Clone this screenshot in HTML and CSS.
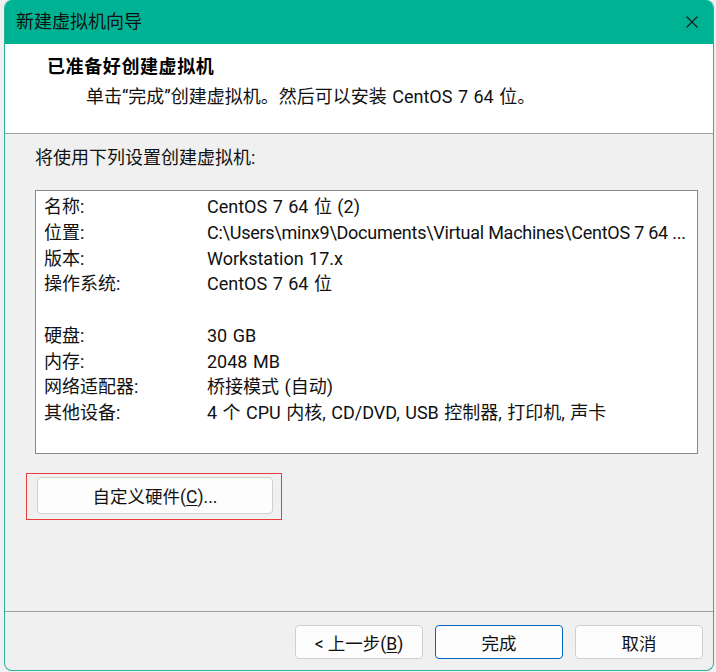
FILE: index.html
```html
<!DOCTYPE html>
<html lang="zh-CN">
<head>
<meta charset="utf-8">
<title>新建虚拟机向导</title>
<link rel="stylesheet" href="styles.css">
</head>
<body>
<div class="window">
  <div class="titlebar">
    <span class="title">新建虚拟机向导</span>
    <svg class="close" width="12" height="12" viewBox="0 0 12 12" aria-hidden="true">
      <path d="M0.5 0.5 L11.5 11.5 M11.5 0.5 L0.5 11.5" stroke="#1a1a1a" stroke-width="1.1" fill="none"/>
    </svg>
  </div>
  <div class="header">
    <div class="h-title">已准备好创建虚拟机</div>
    <div class="h-sub">单击“完成”创建虚拟机。然后可以安装 CentOS 7 64 位。</div>
  </div>
  <div class="body">
    <div class="intro">将使用下列设置创建虚拟机:</div>
    <div class="summary">
      <div class="row"><span class="k">名称:</span><span class="v">CentOS 7 64 位 (2)</span></div>
      <div class="row"><span class="k">位置:</span><span class="v path">C:\Users\minx9\Documents\Virtual Machines\CentOS 7 64 ...</span></div>
      <div class="row"><span class="k">版本:</span><span class="v">Workstation 17.x</span></div>
      <div class="row"><span class="k">操作系统:</span><span class="v">CentOS 7 64 位</span></div>
      <div class="row gap"></div>
      <div class="row"><span class="k">硬盘:</span><span class="v">30 GB</span></div>
      <div class="row"><span class="k">内存:</span><span class="v">2048 MB</span></div>
      <div class="row"><span class="k">网络适配器:</span><span class="v">桥接模式 (自动)</span></div>
      <div class="row"><span class="k">其他设备:</span><span class="v">4 个 CPU 内核, CD/DVD, USB 控制器, 打印机, 声卡</span></div>
    </div>
    <div class="highlight">
      <button class="btn hw">自定义硬件(<u>C</u>)...</button>
    </div>
  </div>
  <div class="footer">
    <button class="btn foot">&lt; 上一步(<u>B</u>)</button>
    <button class="btn foot primary">完成</button>
    <button class="btn foot">取消</button>
  </div>
</div>
</body>
</html>
```

FILE: styles.css
```css
* { box-sizing: border-box; }

html, body {
  margin: 0;
  padding: 0;
  background: #f0f0f0;
}

body {
  font-family: Roboto, "Noto Sans CJK SC", sans-serif;
  font-size: 18px;
  color: #111;
}

.window {
  margin-left: 4px;
  width: 710px;
  height: 671px;
  border: 1px solid #2bb39a;
  border-top: none;
  border-radius: 8px;
  overflow: hidden;
  background: #f0f0f0;
  display: flex;
  flex-direction: column;
}

.titlebar {
  height: 44px;
  background: #00b294;
  display: flex;
  align-items: center;
  justify-content: space-between;
  padding: 0 15px 1px 11px;
  flex: none;
}

.title {
  font-size: 18px;
  color: #111;
  line-height: 24px;
}

.close { display: block; }

.header {
  background: #fff;
  height: 90px;
  border-bottom: 1px solid #a0a0a0;
  padding: 10px 0 0 42px;
  flex: none;
}

.h-title {
  font-weight: bold;
  font-size: 18px;
  letter-spacing: 0.6px;
  line-height: 26px;
  color: #000;
}

.h-sub {
  margin-left: 39px;
  margin-top: 4px;
  line-height: 26px;
  word-spacing: 1px;
}

.body {
  flex: 1;
  padding: 11px 15px 0 30px;
}

.intro {
  line-height: 26px;
  margin-bottom: 19px;
}

.summary {
  background: #fff;
  border: 1px solid #8a8a8a;
  height: 264px;
  padding: 3px 8px 0 8px;
}

.row {
  display: grid;
  grid-template-columns: 163px 1fr;
  height: 25.75px;
  line-height: 25.75px;
  white-space: nowrap;
}

.v {
  overflow: hidden;
  word-spacing: 1px;
}

.path {
  letter-spacing: -0.25px;
  word-spacing: 0;
}

.highlight {
  margin: 19px 0 0 -9px;
  width: 256px;
  height: 47px;
  border: 1px solid #ec3b3b;
  padding: 3px 0 0 10px;
}

.btn {
  font-family: Roboto, "Noto Sans CJK SC", sans-serif;
  font-size: 17.5px;
  color: #111;
  background: #fdfdfd;
  border: 1px solid #d0d0d0;
  border-radius: 4px;
  padding: 0;
  margin: 0;
}

.btn u { text-underline-offset: 2px; }

.hw {
  width: 236px;
  height: 37px;
}

.footer {
  flex: none;
  height: 59px;
  border-top: 1px solid #a0a0a0;
  display: flex;
  justify-content: flex-end;
  gap: 12px;
  padding: 13px 10px 0 0;
}

.foot {
  width: 128px;
  height: 34px;
}

.primary {
  border-color: #0067c0;
}
```
